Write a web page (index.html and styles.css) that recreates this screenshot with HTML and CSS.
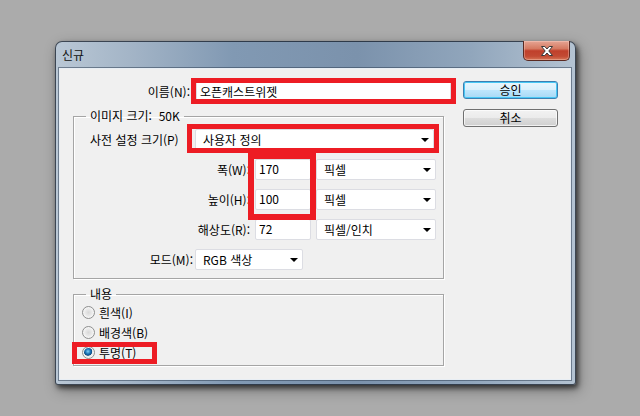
FILE: index.html
```html
<!DOCTYPE html>
<html lang="ko">
<head>
    <meta charset="UTF-8">
    <meta name="viewport" content="width=device-width, initial-scale=1.0">
    <title>신규</title>
    <link rel="stylesheet" href="styles.css">
</head>
<body>
    <div class="window">
        <div class="titlebar">
            <span class="title">신규</span>
            <button class="close" aria-label="닫기">
                <svg width="12" height="10" viewBox="0 0 12 10">
                    <path d="M0.5 0.5 H3.8 L6 3 L8.2 0.5 H11.5 L7.8 5 L11.5 9.5 H8.2 L6 7 L3.8 9.5 H0.5 L4.2 5 Z" fill="#fff" stroke="#3a3a3a" stroke-width="1"/>
                </svg>
            </button>
        </div>

        <div class="client">
            <div class="form">
                <div class="row name-row">
                    <label class="label">이름(N):</label>
                    <input class="text name" type="text" value="오픈캐스트위젯">
                </div>

                <fieldset class="group size-group">
                    <legend>이미지 크기:&nbsp; 50K</legend>
                    <div class="row preset-row">
                        <label class="label">사전 설정 크기(P)</label>
                        <div class="select preset"><span>사용자 정의</span><i class="arrow"></i></div>
                    </div>
                    <div class="row dim-row">
                        <label class="label">폭(W):</label>
                        <input class="text num" type="text" value="170">
                        <div class="select unit"><span>픽셀</span><i class="arrow"></i></div>
                    </div>
                    <div class="row dim-row">
                        <label class="label">높이(H):</label>
                        <input class="text num" type="text" value="100">
                        <div class="select unit"><span>픽셀</span><i class="arrow"></i></div>
                    </div>
                    <div class="row dim-row">
                        <label class="label">해상도(R):</label>
                        <input class="text num" type="text" value="72">
                        <div class="select unit"><span>픽셀/인치</span><i class="arrow"></i></div>
                    </div>
                    <div class="row mode-row">
                        <label class="label">모드(M):</label>
                        <div class="select mode"><span>RGB 색상</span><i class="arrow"></i></div>
                    </div>
                </fieldset>

                <fieldset class="group content-group">
                    <legend>내용</legend>
                    <label class="radio"><span class="dot"></span>흰색(I)</label>
                    <label class="radio"><span class="dot"></span>배경색(B)</label>
                    <label class="radio"><span class="dot checked"></span>투명(T)</label>
                </fieldset>
            </div>

            <div class="actions">
                <button class="btn default">승인</button>
                <button class="btn">취소</button>
            </div>

            <!-- 빨간 강조 표시 -->
            <div class="mark mark-name"></div>
            <div class="mark mark-preset"></div>
            <div class="mark mark-size"></div>
            <div class="mark mark-trans"></div>
        </div>
    </div>
</body>
</html>
```

FILE: styles.css
```css
* {
    box-sizing: border-box;
}

body {
    margin: 0;
    height: 416px;
    overflow: hidden;
    padding: 41px 0 0 55px;
    background: #ababab;
    font-family: "Noto Sans CJK KR", "Noto Sans", sans-serif;
    font-size: 12px;
    color: #000;
}

.window {
    width: 521px;
    height: 344px;
    padding: 0 5px 5px 4px;
    border: 1px solid rgba(20, 28, 40, 0.75);
    border-radius: 7px 7px 3px 3px;
    background: linear-gradient(90deg, #b9c7d5 0%, #a4b5c7 14%, #8199b3 34%, #7b92ac 58%, #91a6bc 80%, #b4c3d2 100%);
    box-shadow: 2px 3px 5px rgba(0, 0, 0, 0.6), 3px 5px 14px rgba(0, 0, 0, 0.35);
    display: flex;
    flex-direction: column;
}

.titlebar {
    height: 27px;
    display: flex;
    justify-content: space-between;
    align-items: flex-start;
}

.title {
    margin: 6px 0 0 2px;
    line-height: 14px;
    color: #111;
}

.close {
    width: 47px;
    height: 20px;
    margin-top: -1px;
    padding: 0;
    border: 1px solid #5a2a22;
    border-top: none;
    border-radius: 0 0 5px 5px;
    background: linear-gradient(#e6a594 0%, #d57a62 40%, #c0402b 52%, #c24a33 80%, #d77657 100%);
    box-shadow: inset 0 0 0 1px rgba(255, 220, 210, 0.35);
    display: flex;
    align-items: center;
    justify-content: center;
}

.client {
    position: relative;
    width: 510px;
    height: 310px;
    background: #f0f0f0;
    display: flex;
    box-shadow: 0 0 0 1px #e8eef4, 0 0 0 2px rgba(50, 65, 85, 0.55);
}

.form {
    margin-left: 13px;
    width: 378px;
    padding-top: 12px;
}

.row {
    display: flex;
    align-items: center;
    height: 21px;
}

.label {
    flex: none;
    white-space: nowrap;
}

.name-row .label {
    width: 117px;
    text-align: right;
    margin-right: 6px;
}

.text {
    height: 21px;
    margin: 0;
    padding: 0 3px;
    border: 1px solid #dcdde3;
    border-radius: 2px;
    background: #fff;
    font-family: inherit;
    font-size: 12px;
    color: #000;
    outline: none;
}

.name {
    width: 255px;
}

.group {
    margin: 6px 0 0 0;
    padding: 5px 0 8px 0;
    width: 371px;
    border: 1px solid #a5a5a5;
    box-shadow: 1px 1px 0 #fff, inset 1px 1px 0 #fff;
}

.group legend {
    margin-left: 12px;
    padding: 0 4px;
    line-height: 16px;
}

.size-group .row + .row {
    margin-top: 9px;
}

.preset-row .label {
    width: 121px;
    padding-left: 16px;
}

.dim-row .label {
    width: 176px;
    text-align: right;
}

.mode-row .label {
    width: 121px;
    text-align: right;
    padding-right: 2px;
}

.num {
    width: 56px;
    margin-left: 5px;
    padding-bottom: 3px;
}

.select {
    height: 21px;
    display: flex;
    align-items: center;
    padding: 0 4px 0 7px;
    border: 1px solid #dcdde3;
    border-radius: 2px;
    background: #fff;
}

.select span {
    flex: 1;
    white-space: nowrap;
}

.arrow {
    width: 0;
    height: 0;
    border-left: 4px solid transparent;
    border-right: 4px solid transparent;
    border-top: 4px solid #000;
}

.preset {
    width: 239px;
}

.unit {
    width: 120px;
    margin-left: 5px;
}

.mode {
    width: 108px;
}

.content-group {
    margin-top: 7px;
    padding: 0 0 3px 0;
}

.radio {
    display: flex;
    align-items: center;
    height: 20px;
    padding-left: 8px;
}

.dot {
    width: 13px;
    height: 13px;
    margin-right: 4px;
    border-radius: 50%;
    border: 1px solid #8e8f8f;
    background: radial-gradient(circle at 50% 50%, #d8d8d8 0, #eeeeee 55%, #fafafa 100%);
    box-shadow: inset 0 0 0 1px #f4f4f4;
}

.dot.checked {
    background: radial-gradient(circle at 45% 40%, #7fd2f7 0, #1c74b8 2.5px, #0d4f86 4px, #e9e9e9 4.6px, #f7f7f7 100%);
}

.actions {
    margin-left: 12px;
    padding-top: 12px;
    display: flex;
    flex-direction: column;
    gap: 10px;
}

.btn {
    width: 95px;
    height: 18px;
    padding: 0;
    border: 1px solid #707070;
    border-radius: 3px;
    background: linear-gradient(#f2f2f2 0%, #ebebeb 50%, #dddddd 51%, #cfcfcf 100%);
    box-shadow: inset 0 0 0 1px rgba(255, 255, 255, 0.7);
    font-family: inherit;
    font-size: 12px;
    line-height: 14px;
    color: #000;
}

.btn.default {
    border-color: #3c7fb1;
    background: linear-gradient(#eaf6fd 0%, #d9f0fc 50%, #bee6fd 51%, #a7d9f5 100%);
    box-shadow: inset 0 0 0 1px #48c8f5;
}

.mark {
    position: absolute;
    border: 5px solid #ed1c24;
}

.mark-name {
    left: 131px;
    top: 9px;
    width: 265px;
    height: 26px;
}

.mark-preset {
    left: 127px;
    top: 55px;
    width: 252px;
    height: 29px;
}

.mark-size {
    left: 188px;
    top: 84px;
    width: 68px;
    height: 67px;
    border-width: 6px;
}

.mark-trans {
    left: 12px;
    top: 273px;
    width: 85px;
    height: 22px;
}
```
